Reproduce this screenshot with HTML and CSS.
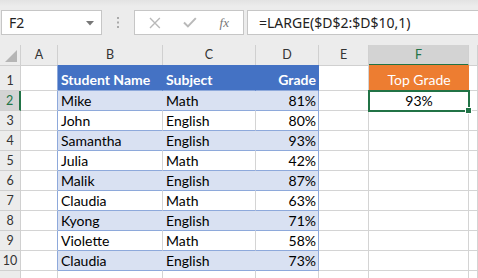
FILE: index.html
```html
<!DOCTYPE html>
<html lang="en">
<head>
    <meta charset="UTF-8">
    <title>Top Grade - LARGE</title>
    <link rel="stylesheet" href="styles.css">
</head>
<body>
    <div class="toolbar">
        <div class="namebox">
            <span>F2</span>
            <svg class="caret" width="8" height="5" viewBox="0 0 8 5"><path d="M0 0H8L4 4.5Z" fill="#777"/></svg>
        </div>
        <svg class="grip" width="3" height="11" viewBox="0 0 3 11">
            <rect x="0" y="0" width="2" height="2" fill="#aaa"/>
            <rect x="0" y="4.5" width="2" height="2" fill="#aaa"/>
            <rect x="0" y="9" width="2" height="2" fill="#aaa"/>
        </svg>
        <div class="fx-tools">
            <svg width="12" height="12" viewBox="0 0 12 12"><path d="M1 1L11 11M11 1L1 11" stroke="#b9b9b9" stroke-width="1.4" fill="none"/></svg>
            <svg width="14" height="11" viewBox="0 0 14 11"><path d="M1 5.5L5 9.5L13 1" stroke="#b9b9b9" stroke-width="2" fill="none"/></svg>
            <span class="fx">fx</span>
        </div>
        <div class="formula">=LARGE($D$2:$D$10,1)</div>
    </div>

    <div class="sheet">
        <div class="row head">
            <div class="corner"><span class="tri"></span></div>
            <div class="ch">A</div>
            <div class="ch">B</div>
            <div class="ch">C</div>
            <div class="ch">D</div>
            <div class="ch">E</div>
            <div class="ch ch-sel">F</div>
            <div class="ch"></div>
        </div>

        <div class="row first">
            <div class="rh">1</div>
            <div class="c edge"></div>
            <div class="c th">Student Name</div>
            <div class="c th">Subject</div>
            <div class="c th num">Grade</div>
            <div class="c"></div>
            <div class="c top-grade">Top Grade</div>
            <div class="c"></div>
        </div>

        <div class="row band">
            <div class="rh rh-sel">2</div>
            <div class="c edge"></div>
            <div class="c t">Mike</div>
            <div class="c t">Math</div>
            <div class="c t num last">81%</div>
            <div class="c"></div>
            <div class="c active">93%<span class="handle"></span></div>
            <div class="c"></div>
        </div>

        <div class="row">
            <div class="rh">3</div>
            <div class="c edge"></div>
            <div class="c t">John</div>
            <div class="c t">English</div>
            <div class="c t num last">80%</div>
            <div class="c"></div>
            <div class="c"></div>
            <div class="c"></div>
        </div>

        <div class="row band">
            <div class="rh">4</div>
            <div class="c edge"></div>
            <div class="c t">Samantha</div>
            <div class="c t">English</div>
            <div class="c t num last">93%</div>
            <div class="c"></div>
            <div class="c"></div>
            <div class="c"></div>
        </div>

        <div class="row">
            <div class="rh">5</div>
            <div class="c edge"></div>
            <div class="c t">Julia</div>
            <div class="c t">Math</div>
            <div class="c t num last">42%</div>
            <div class="c"></div>
            <div class="c"></div>
            <div class="c"></div>
        </div>

        <div class="row band">
            <div class="rh">6</div>
            <div class="c edge"></div>
            <div class="c t">Malik</div>
            <div class="c t">English</div>
            <div class="c t num last">87%</div>
            <div class="c"></div>
            <div class="c"></div>
            <div class="c"></div>
        </div>

        <div class="row">
            <div class="rh">7</div>
            <div class="c edge"></div>
            <div class="c t">Claudia</div>
            <div class="c t">Math</div>
            <div class="c t num last">63%</div>
            <div class="c"></div>
            <div class="c"></div>
            <div class="c"></div>
        </div>

        <div class="row band">
            <div class="rh">8</div>
            <div class="c edge"></div>
            <div class="c t">Kyong</div>
            <div class="c t">English</div>
            <div class="c t num last">71%</div>
            <div class="c"></div>
            <div class="c"></div>
            <div class="c"></div>
        </div>

        <div class="row">
            <div class="rh">9</div>
            <div class="c edge"></div>
            <div class="c t">Violette</div>
            <div class="c t">Math</div>
            <div class="c t num last">58%</div>
            <div class="c"></div>
            <div class="c"></div>
            <div class="c"></div>
        </div>

        <div class="row band">
            <div class="rh">10</div>
            <div class="c edge"></div>
            <div class="c t">Claudia</div>
            <div class="c t">English</div>
            <div class="c t num last">73%</div>
            <div class="c"></div>
            <div class="c"></div>
            <div class="c"></div>
        </div>

        <div class="row">
            <div class="rh"></div>
            <div class="c"></div>
            <div class="c"></div>
            <div class="c"></div>
            <div class="c"></div>
            <div class="c"></div>
            <div class="c"></div>
            <div class="c"></div>
        </div>
    </div>
</body>
</html>
```

FILE: styles.css
```css
body {
    margin: 0;
    width: 478px;
    height: 278px;
    overflow: hidden;
    background: #ffffff;
    font-family: Lato, "Liberation Sans", sans-serif;
    color: #000;
}
.toolbar {
    height: 45px;
    box-sizing: border-box;
    padding: 10px 0 10px 1px;
    display: flex;
    align-items: stretch;
    background: linear-gradient(#e3e3e3, #ececec 6px, #ececec);
}
.namebox {
    width: 101px;
    box-sizing: border-box;
    background: #fff;
    border: 1px solid #c6c6c6;
    display: flex;
    align-items: center;
    justify-content: space-between;
    padding: 0 7px 0 7px;
    font-family: "Noto Sans", sans-serif;
    font-size: 14px;
    color: #222;
}
.caret {
    margin-top: 1px;
}
.grip {
    align-self: center;
    margin: 0 14px 0 15px;
}
.fx-tools {
    width: 110px;
    box-sizing: border-box;
    background: #fff;
    border: 1px solid #c6c6c6;
    display: flex;
    align-items: center;
    padding: 0 14px 0 14px;
    gap: 22px;
}
.fx {
    font-family: "Liberation Serif", serif;
    font-style: italic;
    font-size: 13px;
    color: #777;
    margin-left: 1px;
}
.formula {
    flex: 1;
    min-width: 0;
    margin-left: 3px;
    background: #fff;
    border: 1px solid #c6c6c6;
    border-right: none;
    display: flex;
    align-items: center;
    padding-left: 11px;
    font-family: "Noto Sans", sans-serif;
    font-size: 14px;
    color: #222;
}

.sheet {
    font-size: 14px;
}
.row {
    display: grid;
    grid-template-columns: 21px 37px 105px 93px 63px 50px 100px 1fr;
    height: 20px;
}
.row > div {
    box-sizing: border-box;
    min-width: 0;
    border-right: 1px solid #d4d4d4;
    border-bottom: 1px solid #d4d4d4;
    white-space: nowrap;
}
.row.first {
    height: 26px;
}

/* headers */
.head > div {
    background: #ececec;
    border-color: #d0d0d0;
    font-size: 12.5px;
    color: #333;
    text-align: center;
    line-height: 19px;
}
.corner {
    position: relative;
}
.tri {
    position: absolute;
    right: 3px;
    bottom: 3px;
    width: 0;
    height: 0;
    border-left: 12px solid transparent;
    border-bottom: 12px solid #b5b5b5;
}
.head .ch-sel {
    background: #d3d3d3;
    border-bottom: 2px solid #217346;
    color: #217346;
}
.rh {
    background: #ececec;
    border-color: #d0d0d0 !important;
    font-size: 12.5px;
    color: #333;
    text-align: center;
    display: flex;
    align-items: flex-end;
    justify-content: center;
    line-height: 18px;
}
.rh.rh-sel {
    background: #d3d3d3;
    border-right: 2px solid #217346 !important;
    color: #217346;
}

/* cells */
.c {
    display: flex;
    align-items: flex-end;
    line-height: 18px;
    padding: 0 2px 0 3px;
}
.c.edge {
    border-right-color: #8ea9db;
}
.c.t {
    border-bottom-color: #8ea9db;
}
.c.num {
    justify-content: flex-end;
}
.c.last {
    border-right-color: #8ea9db;
}
.th {
    background: #4472c4;
    color: #fff;
    font-weight: bold;
    border-right-color: #4472c4 !important;
    border-bottom-color: #8ea9db !important;
    line-height: 20px;
}
.band .c.t {
    background: #d9e1f2;
    border-right-color: #d9e1f2;
}
.band .c.last {
    border-right-color: #8ea9db;
}
.top-grade {
    background: #ed7d31;
    color: #fff;
    justify-content: center;
    border-right-color: #ed7d31 !important;
    border-bottom-color: #fff !important;
    line-height: 20px;
}
.active {
    position: relative;
    justify-content: center;
    outline: 2px solid #217346;
    outline-offset: -1px;
}
.handle {
    position: absolute;
    right: -4px;
    bottom: -4px;
    width: 5px;
    height: 5px;
    background: #217346;
    border: 1px solid #fff;
}
```
